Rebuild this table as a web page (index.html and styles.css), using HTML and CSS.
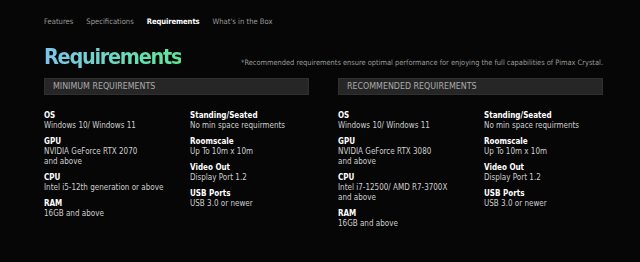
FILE: index.html
```html
<!DOCTYPE html>
<html lang="en">
<head>
    <meta charset="UTF-8">
    <meta name="viewport" content="width=device-width, initial-scale=1.0">
    <title>Pimax Crystal - Requirements</title>
    <link rel="stylesheet" href="styles.css">
</head>
<body>
    <nav class="tabs">
        <a href="#features">Features</a>
        <a href="#specs">Specifications</a>
        <a href="#requirements" class="active">Requirements</a>
        <a href="#box">What's in the Box</a>
    </nav>

    <section class="requirements">
        <div class="heading">
            <h1>Requirements</h1>
            <p class="note">*Recommended requirements ensure optimal performance for enjoying the full capabilities of Pimax Crystal.</p>
        </div>

        <div class="columns">
            <div class="panel">
                <h2>MINIMUM REQUIREMENTS</h2>
                <div class="specs">
                    <dl>
                        <div class="item"><dt>OS</dt><dd>Windows 10/ Windows 11</dd></div>
                        <div class="item"><dt>GPU</dt><dd>NVIDIA GeForce RTX 2070<br>and above</dd></div>
                        <div class="item"><dt>CPU</dt><dd>Intel i5-12th generation or above</dd></div>
                        <div class="item"><dt>RAM</dt><dd>16GB and above</dd></div>
                    </dl>
                    <dl>
                        <div class="item"><dt>Standing/Seated</dt><dd>No min space requirments</dd></div>
                        <div class="item"><dt>Roomscale</dt><dd>Up To 10m x 10m</dd></div>
                        <div class="item"><dt>Video Out</dt><dd>Display Port 1.2</dd></div>
                        <div class="item"><dt>USB Ports</dt><dd>USB 3.0 or newer</dd></div>
                    </dl>
                </div>
            </div>

            <div class="panel">
                <h2>RECOMMENDED REQUIREMENTS</h2>
                <div class="specs">
                    <dl>
                        <div class="item"><dt>OS</dt><dd>Windows 10/ Windows 11</dd></div>
                        <div class="item"><dt>GPU</dt><dd>NVIDIA GeForce RTX 3080<br>and above</dd></div>
                        <div class="item"><dt>CPU</dt><dd>Intel i7-12500/ AMD R7-3700X<br>and above</dd></div>
                        <div class="item"><dt>RAM</dt><dd>16GB and above</dd></div>
                    </dl>
                    <dl>
                        <div class="item"><dt>Standing/Seated</dt><dd>No min space requirments</dd></div>
                        <div class="item"><dt>Roomscale</dt><dd>Up To 10m x 10m</dd></div>
                        <div class="item"><dt>Video Out</dt><dd>Display Port 1.2</dd></div>
                        <div class="item"><dt>USB Ports</dt><dd>USB 3.0 or newer</dd></div>
                    </dl>
                </div>
            </div>
        </div>
    </section>
</body>
</html>
```

FILE: styles.css
```css
body {
    margin: 0;
    padding: 16px 37px 0 44px;
    background: #060606;
    color: #d8d8d8;
    font-family: 'DejaVu Sans Condensed', 'DejaVu Sans', sans-serif;
    height: 262px;
    box-sizing: border-box;
    overflow: hidden;
}
.tabs {
    display: flex;
    gap: 13px;
    font-size: 7.6px;
    line-height: 12px;
}
.tabs a {
    color: #9a9a9a;
    text-decoration: none;
}
.tabs a.active {
    color: #ffffff;
    font-weight: 700;
    letter-spacing: -0.1px;
}
.heading {
    display: flex;
    align-items: flex-end;
    justify-content: space-between;
    margin-top: 14px;
}
h1 {
    margin: 0;
    font-size: 21.5px;
    line-height: 30px;
    font-weight: 700;
    letter-spacing: -1.3px;
    background: linear-gradient(90deg, #7ec4ea 0%, #6fd6c4 50%, #5ce896 100%);
    -webkit-background-clip: text;
    background-clip: text;
    color: transparent;
}
.note {
    margin: 0 0 5px;
    font-size: 7.4px;
    color: #9c9c9c;
}
.columns {
    display: grid;
    grid-template-columns: 265px 265px;
    column-gap: 29px;
    margin-top: 6px;
}
.panel h2 {
    margin: 0;
    height: 17px;
    padding-left: 8px;
    background: #262626;
    border: 1px solid #303030;
    box-sizing: border-box;
    color: #ababab;
    font-size: 8.8px;
    font-weight: 400;
    line-height: 15px;
}
.specs {
    display: grid;
    grid-template-columns: 146px 1fr;
    margin-top: 16px;
}
dl {
    margin: 0;
    display: flex;
    flex-direction: column;
    gap: 6px;
}
dt {
    font-size: 8px;
    line-height: 10px;
    font-weight: 700;
    color: #ffffff;
}
dd {
    margin: 0;
    font-size: 8px;
    line-height: 10px;
    color: #cfcfcf;
}
```
